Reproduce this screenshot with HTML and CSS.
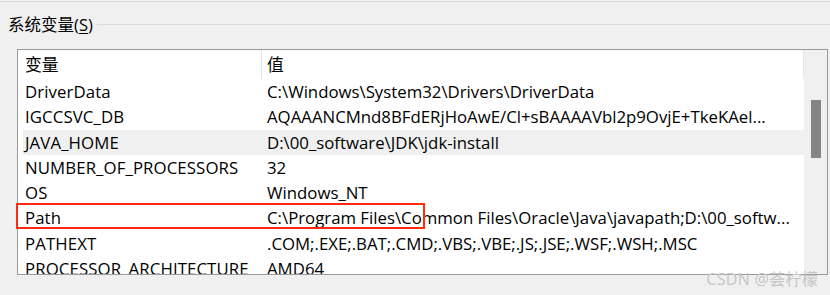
FILE: index.html
```html
<!DOCTYPE html>
<html lang="zh-CN">
<head>
	<meta charset="UTF-8">
	<title>系统变量</title>
	<link rel="stylesheet" href="styles.css">
</head>
<body>

	<div class="top-line"></div>

	<!-- group box title -->
	<div class="group-head">
		<div class="group-label">系统变量(<u>S</u>)</div>
		<div class="group-rule"></div>
	</div>

	<div class="listbox">
		<div class="list">
			<div class="list-head">
				<div class="col-name">变量</div>
				<div class="col-value">值</div>
				<div class="col-rest"></div>
			</div>
			<div class="row"><div class="col-name">DriverData</div><div class="col-value">C:\Windows\System32\Drivers\DriverData</div></div>
			<div class="row"><div class="col-name">IGCCSVC_DB</div><div class="col-value">AQAAANCMnd8BFdERjHoAwE/Cl+sBAAAAVbl2p9OvjE+TkeKAel...</div></div>
			<div class="row selected"><div class="col-name">JAVA_HOME</div><div class="col-value">D:\00_software\JDK\jdk-install</div></div>
			<div class="row"><div class="col-name">NUMBER_OF_PROCESSORS</div><div class="col-value">32</div></div>
			<div class="row"><div class="col-name">OS</div><div class="col-value">Windows_NT</div></div>
			<div class="row"><div class="col-name">Path</div><div class="col-value">C:\Program Files\Common Files\Oracle\Java\javapath;D:\00_softw...</div></div>
			<div class="row"><div class="col-name">PATHEXT</div><div class="col-value">.COM;.EXE;.BAT;.CMD;.VBS;.VBE;.JS;.JSE;.WSF;.WSH;.MSC</div></div>
			<div class="row"><div class="col-name">PROCESSOR_ARCHITECTURE</div><div class="col-value">AMD64</div></div>
		</div>
		<div class="scrollbar">
			<div class="thumb"></div>
		</div>
	</div>

	<!-- red mark around the Path row -->
	<div class="mark"></div>

	<div class="watermark">CSDN @荟柠檬</div>

</body>
</html>
```

FILE: styles.css
```css
body {
	margin: 0;
	width: 830px;
	height: 295px;
	overflow: hidden;
	position: relative;
	background: #f0f0f0;
	font-family: "Open Sans", "Noto Sans CJK SC", sans-serif;
	font-size: 16.8px;
	color: #000;
}

.top-line {
	margin-top: 1px;
	height: 1px;
	background: #dcdcdc;
}

.group-head {
	display: flex;
	align-items: center;
	height: 44px;
	margin-top: 2px;
}

.group-label {
	padding-left: 8px;
	padding-right: 4px;
	font-size: 16.5px;
	line-height: 20px;
	margin-top: -2px;
}

.group-label u {
	text-underline-offset: 2px;
}

.group-rule {
	flex: 1;
	height: 1px;
	background: #dcdcdc;
	margin-top: -4px;
}

.listbox {
	margin-left: 17px;
	width: 809px;
	height: 224px;
	border: 1px solid #9a9a9a;
	background: #fff;
	display: flex;
	margin-top: 1px;
}

.list {
	flex: 1;
	overflow: hidden;
}

.list-head {
	display: flex;
	height: 29px;
	line-height: 30px;
}

.list-head .col-name {
	border-right: 1px solid #e5e5e5;
	width: 236px;
}

.list-head .col-rest {
	flex: 1;
	border-right: 1px solid #e5e5e5;
}

.col-name {
	width: 237px;
	padding-left: 7px;
	white-space: nowrap;
}

.col-value {
	padding-left: 5px;
	white-space: nowrap;
}

.row {
	display: flex;
	height: 25.3px;
	line-height: 25.3px;
	margin-left: 5px;
}

.row .col-name {
	width: 232px;
	padding-left: 2px;
	letter-spacing: 0.1px;
}

.row .col-value {
	padding-left: 10px;
}

.row.selected {
	background: #f0f0f0;
}

.scrollbar {
	width: 23px;
	background: #f0f0f0;
}

.thumb {
	margin: 50px 0 0 7px;
	width: 10px;
	height: 58px;
	background: #858585;
}

.mark {
	position: absolute;
	left: 16px;
	top: 203px;
	width: 405px;
	height: 22px;
	border: 2px solid #ff2a10;
}

.watermark {
	position: absolute;
	right: 12px;
	top: 266px;
	font-size: 16px;
	color: #c6c6c6;
	letter-spacing: 0.3px;
}
```
